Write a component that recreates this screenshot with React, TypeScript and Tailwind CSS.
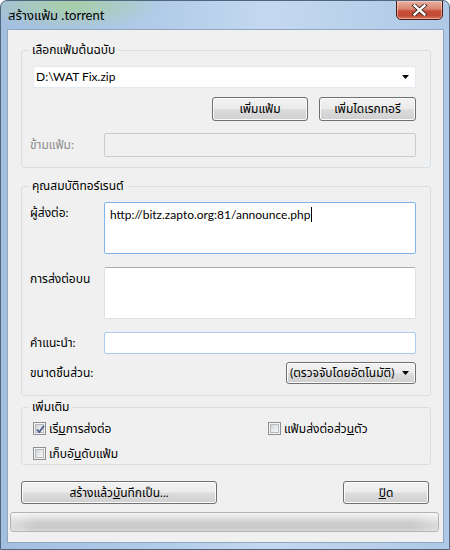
import React from "react";

const F = "font-['Lato','Noto_Sans','Noto_Sans_Thai','Tahoma',sans-serif]";

function Btn({ children, className = "" }: { children: React.ReactNode; className?: string }) {
  return (
    <div
      className={`flex items-center justify-center rounded-[3px] border border-[#707070] bg-[linear-gradient(#f2f2f2_0%,#ebebeb_48%,#dddddd_52%,#cfcfcf_100%)] shadow-[inset_0_0_0_1px_#fbfbfb] text-[12px] text-black leading-none ${className}`}
    >
      {children}
    </div>
  );
}

function Arrow() {
  return (
    <svg width="7" height="4" viewBox="0 0 7 4">
      <path d="M0 0H7L3.5 4Z" fill="#000" />
    </svg>
  );
}

function Check({ checked = false }: { checked?: boolean }) {
  return (
    <div className="relative h-[13px] w-[13px] flex-none border border-[#8e8f8f] bg-[#f4f4f4] p-[1px]">
      <div className="h-full w-full border border-[#b4b9be] bg-[linear-gradient(135deg,#d3d6da,#f8f8f8)]" />
      {checked && (
        <svg className="absolute left-[1px] top-[1px]" width="11" height="11" viewBox="0 0 11 11">
          <path d="M2 5.5 L4.3 8 L9 1.8" fill="none" stroke="#4b5f8f" strokeWidth="1.8" />
        </svg>
      )}
    </div>
  );
}

function Group({ title, className = "", children }: { title: string; className?: string; children: React.ReactNode }) {
  return (
    <div className={`relative rounded-[3px] border border-[#d5dfe5] ${className}`}>
      <span className="absolute left-[7px] top-[-9px] bg-[#f0f0f0] px-[3px] text-[12px] leading-[16px] text-black">
        {title}
      </span>
      {children}
    </div>
  );
}

export default function App() {
  return (
    <div className={`${F} h-[550px] w-[450px] bg-white`}>
      <div className="relative h-[550px] w-[450px] overflow-hidden rounded-t-[7px] border border-[#51667d] bg-[radial-gradient(ellipse_90px_24px_at_70px_4px,#a7cfa6_0%,rgba(167,207,166,0)_100%),linear-gradient(90deg,#a3bfdf_0%,#b1cbe8_35%,#c4d9f0_60%,#aec8e5_100%)]">
        <div className="flex h-[28px] items-start justify-between pl-[7px] pr-[6px]">
          <div className="mt-[6px] text-[13px] leading-[16px] text-black">สร้างแฟ้ม .torrent</div>
          <div className="mt-[-1px] flex h-[20px] w-[47px] items-center justify-center rounded-b-[5px] border border-[#4d1a14] bg-[linear-gradient(#eab1a2_0%,#d98572_45%,#c8503a_55%,#c04a33_80%,#d9735a_100%)] shadow-[inset_0_0_0_1px_rgba(255,220,210,0.55)]">
            <svg width="15" height="12" viewBox="0 0 15 12">
              <path d="M2.5 1.5 L12.5 10.5 M12.5 1.5 L2.5 10.5" stroke="#3b1f1a" strokeWidth="4.2" strokeLinecap="square" />
              <path d="M2.5 1.5 L12.5 10.5 M12.5 1.5 L2.5 10.5" stroke="#ffffff" strokeWidth="2.4" strokeLinecap="square" />
            </svg>
          </div>
        </div>

        <div className="ml-[6px] flex h-[514px] w-[437px] flex-col border border-[#8ea6c0] bg-[#f0f0f0] text-[12px] text-black">
          {/* group 1 */}
          <Group title="เลือกแฟ้มต้นฉบับ" className="ml-[13px] mt-[20px] w-[410px] pb-[10px] pl-[8px] pr-[14px] pt-[15px]">
            <div className="ml-[3px] flex h-[22px] items-center justify-between border border-[#e3e9ef] bg-white pl-[2px] pr-[6px]">
              <span className="text-[12px] leading-none">D:\WAT Fix.zip</span>
              <Arrow />
            </div>
            <div className="mt-[9px] flex justify-end gap-[11px]">
              <Btn className="h-[24px] w-[96px]">เพิ่มแฟ้ม</Btn>
              <Btn className="h-[24px] w-[97px]">เพิ่มไดเรกทอรี</Btn>
            </div>
            <div className="mt-[12px] flex h-[24px] items-center">
              <span className="w-[74px] text-[#8d8d8d]">ข้ามแฟ้ม:</span>
              <div className="h-[24px] flex-1 rounded-[2px] border border-[#c9cdd1] bg-[#f0f0f0]" />
            </div>
          </Group>

          {/* group 2 */}
          <Group title="คุณสมบัติทอร์เรนต์" className="ml-[13px] mt-[18px] w-[410px] pb-[11px] pl-[8px] pr-[14px] pt-[15px]">
            <div className="flex">
              <span className="mt-[3px] w-[74px] leading-[16px]">ผู้ส่งต่อ:</span>
              <div className="h-[52px] flex-1 rounded-[2px] border border-[#7eb4ea] bg-white px-[5px] pt-[3px]">
                <span className="text-[12px] leading-[16px]">http://bitz.zapto.org:81/announce.php</span>
                <span className="ml-[1px] inline-block h-[15px] w-[1px] bg-black align-[-3px]" />
              </div>
            </div>
            <div className="mt-[13px] flex">
              <span className="mt-[4px] w-[74px] leading-[16px]">การส่งต่อบน</span>
              <div className="h-[52px] flex-1 rounded-[2px] border border-[#dbdfe6] border-t-[#abadb3] bg-white" />
            </div>
            <div className="mt-[13px] flex h-[22px] items-center">
              <span className="w-[74px]">คำแนะนำ:</span>
              <div className="h-[22px] flex-1 rounded-[2px] border border-[#a9cbed] bg-white" />
            </div>
            <div className="mt-[8px] flex h-[22px] items-center justify-between">
              <span>ขนาดชิ้นส่วน:</span>
              <Btn className="h-[22px] w-[130px] !justify-between pl-[3px] pr-[6px]">
                <span>(ตรวจจับโดยอัตโนมัติ)</span>
                <Arrow />
              </Btn>
            </div>
          </Group>

          {/* group 3 */}
          <Group title="เพิ่มเติม" className="ml-[13px] mt-[11px] w-[410px] pb-[4px] pl-[11px] pt-[14px]">
            <div className="flex h-[13px] items-center">
              <div className="flex w-[235px] items-center gap-[3px]">
                <Check checked />
                <span>เริ่<u>ม</u>การส่งต่อ</span>
              </div>
              <div className="flex items-center gap-[3px]">
                <Check />
                <span>แฟ้มส่งต่อส่ว<u>น</u>ตัว</span>
              </div>
            </div>
            <div className="mt-[12px] flex h-[13px] items-center gap-[3px]">
              <Check />
              <span>เก็บอั<u>น</u>ดับแฟ้ม</span>
            </div>
          </Group>

          <div className="ml-[13px] mr-[14px] mt-[16px] flex justify-between">
            <Btn className="h-[23px] w-[196px]">สร้างแล้ว<u>บั</u>นทึกเป็น...</Btn>
            <Btn className="h-[23px] w-[86px]"><u>ปิ</u>ด</Btn>
          </div>

          <div className="ml-[2px] mr-[4px] mt-[8px] h-[20px] rounded-[3px] border border-[#b5b5b5] bg-[linear-gradient(90deg,rgba(255,255,255,0.35),rgba(255,255,255,0)_6%,rgba(255,255,255,0)_94%,rgba(255,255,255,0.35)),linear-gradient(#f3f3f3_0%,#dedede_30%,#cdcdcd_55%,#c9c9c9_80%,#d6d6d6_100%)]" />
        </div>
      </div>
    </div>
  );
}
